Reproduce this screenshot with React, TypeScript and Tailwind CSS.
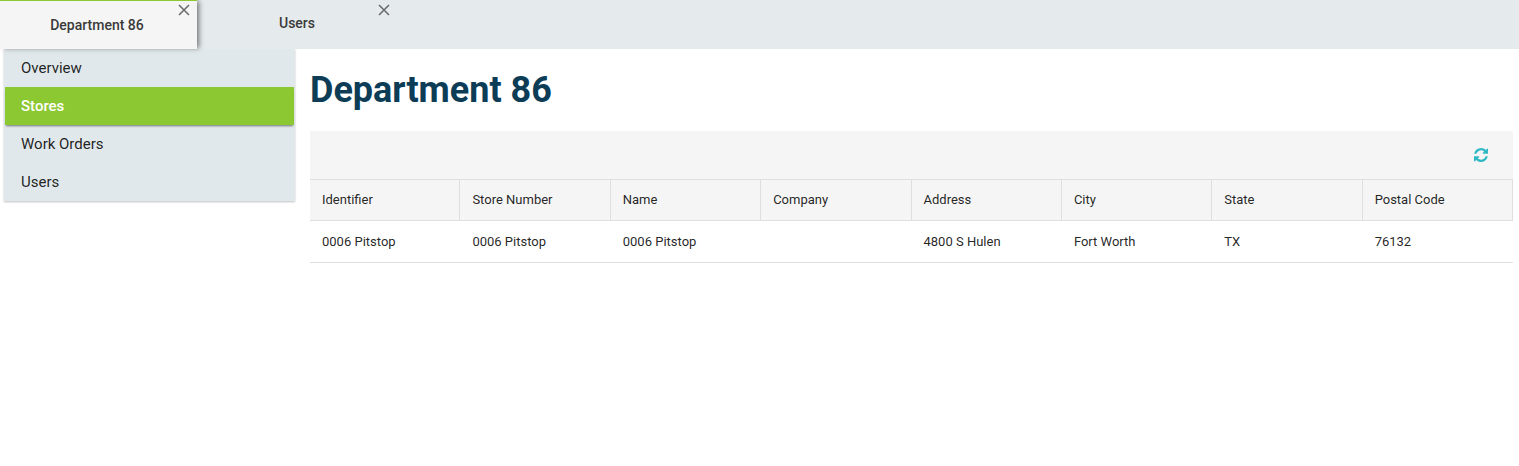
const tabs = [
  { label: "Department 86", active: true },
  { label: "Users", active: false },
];

const navItems = ["Overview", "Stores", "Work Orders", "Users"];
const activeNav = "Stores";

const columns = ["Identifier", "Store Number", "Name", "Company", "Address", "City", "State", "Postal Code"];
const rows = [["0006 Pitstop", "0006 Pitstop", "0006 Pitstop", "", "4800 S Hulen", "Fort Worth", "TX", "76132"]];

function CloseIcon() {
  return (
    <svg viewBox="0 0 12 12" className="size-3" fill="none" stroke="#6b6d6e" strokeWidth="1.6" aria-hidden="true">
      <path d="M1 1 11 11M11 1 1 11" />
    </svg>
  );
}

function RefreshIcon() {
  return (
    <svg viewBox="0 0 1536 1536" className="size-3.5" fill="currentColor" aria-hidden="true">
      <path d="M1511 928q0 5-1 7-64 268-268 434.5t-478 166.5q-146 0-282.5-55t-243.5-157l-129 129q-19 19-45 19t-45-19-19-45v-448q0-26 19-45t45-19h448q26 0 45 19t19 45-19 45l-137 137q71 66 161 102t187 36q134 0 250-65t186-179q11-17 53-117 8-23 30-23h192q13 0 22.5 9.5t9.5 22.5zm25-800v448q0 26-19 45t-45 19h-448q-26 0-45-19t-19-45 19-45l138-138q-148-137-349-137-134 0-250 65t-186 179q-11 17-53 117-8 23-30 23h-199q-13 0-22.5-9.5t-9.5-22.5v-7q65-268 270-434.5t480-166.5q146 0 284 55.5t245 156.5l130-129q19-19 45-19t45 19 19 45z" />
    </svg>
  );
}

function Tab({ label, active }: { label: string; active: boolean }) {
  return (
    <div
      className={
        active
          ? "relative z-10 mr-[3px] h-[49px] w-[197px] border-t border-[#8cc832] bg-[#f5f5f5] shadow-[3px_0_5px_-1px_rgba(0,0,0,0.5)]"
          : "relative h-[49px] w-[194px]"
      }
    >
      <button
        type="button"
        className={
          active
            ? "h-full w-full pr-[3px] text-center text-sm font-medium text-[#3a3a3a]"
            : "h-full w-full pb-[3px] text-center text-sm font-medium text-[#3a3a3a]"
        }
      >
        {label}
      </button>
      <button
        type="button"
        aria-label={`Close ${label}`}
        className={active ? "absolute top-[3px] right-[7px]" : "absolute top-1 right-1"}
      >
        <CloseIcon />
      </button>
    </div>
  );
}

export default function App() {
  return (
    <div className="font-['Roboto',sans-serif] text-black/87">
      <header className="relative z-10 flex h-[49px] bg-[#e5eaed]">
        {tabs.map((tab) => (
          <Tab key={tab.label} label={tab.label} active={tab.active} />
        ))}
      </header>
      <div className="flex items-start">
        <nav className="ml-1 w-[291px] shrink-0 bg-[#e1e8eb] px-px shadow-[0_1px_2px_rgba(0,0,0,0.25)]">
          {navItems.map((item) => (
            <a
              key={item}
              href="#"
              className={
                item === activeNav
                  ? "block h-[38px] bg-[#8cc832] px-4 text-[15px] leading-[38px] font-medium text-white shadow-[0_2px_2px_-1px_rgba(0,0,0,0.5)]"
                  : "block h-[38px] px-4 text-[15px] leading-[38px]"
              }
            >
              {item}
            </a>
          ))}
        </nav>
        <main className="mr-1.5 ml-[15px] min-w-0 flex-1">
          <h1 className="pt-4 pb-4 text-4xl leading-[50px] font-bold text-[#0d3d56]">Department 86</h1>
          <div className="flex h-12 items-center justify-end bg-[#f5f5f5] pr-[25px]">
            <button type="button" aria-label="Refresh" className="text-[#2fb9c4]">
              <RefreshIcon />
            </button>
          </div>
          <table className="w-full table-fixed border-separate border-spacing-0 text-[13px]">
            <thead>
              <tr className="h-[42px] bg-[#f5f5f5]">
                {columns.map((column) => (
                  <th key={column} scope="col" className="border-y border-r border-[#dfdfdf] px-3 text-left font-normal">
                    {column}
                  </th>
                ))}
              </tr>
            </thead>
            <tbody>
              {rows.map((row, r) => (
                <tr key={r} className="h-[42px]">
                  {row.map((cell, c) => (
                    <td key={c} className="border-b border-[#dfdfdf] px-3">
                      {cell}
                    </td>
                  ))}
                </tr>
              ))}
            </tbody>
          </table>
        </main>
      </div>
    </div>
  );
}
